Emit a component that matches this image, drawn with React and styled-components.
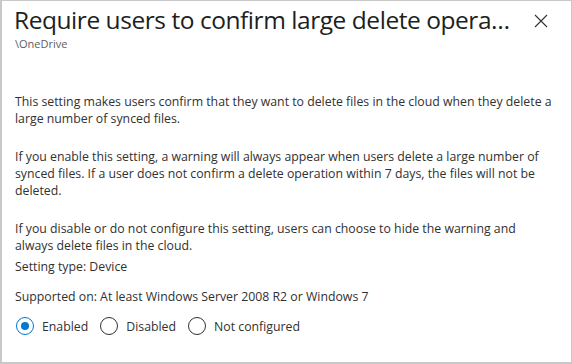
import React, { useState } from 'react'
import styled, { createGlobalStyle } from 'styled-components'

const Global = createGlobalStyle`
  html, body { margin: 0; padding: 0; background: #fff; }
  body { font-family: "Open Sans", "Noto Sans", sans-serif; color: #323130; }
`

const options = ['Enabled', 'Disabled', 'Not configured']

function App() {
  const [value, setValue] = useState('Enabled')
  return (
    <>
      <Global />
      <Panel>
        <Header>
          <TitleBlock>
            <Title>Require users to confirm large delete operations</Title>
            <Path>\OneDrive</Path>
          </TitleBlock>
          <Close aria-label="Close">
            <svg width="14" height="14" viewBox="0 0 14 14">
              <path d="M1 1L13 13M13 1L1 13" stroke="#323130" strokeWidth="1.1" fill="none" />
            </svg>
          </Close>
        </Header>
        <Body>
          <Para>
            This setting makes users confirm that they want to delete files in the cloud when they delete a
            large number of synced files.
          </Para>
          <Para>
            If you enable this setting, a warning will always appear when users delete a large number of
            synced files. If a user does not confirm a delete operation within 7 days, the files will not be
            deleted.
          </Para>
          <Para last>
            If you disable or do not configure this setting, users can choose to hide the warning and
            always delete files in the cloud.
          </Para>
          <Meta>Setting type: Device</Meta>
          <Meta>Supported on: At least Windows Server 2008 R2 or Windows 7</Meta>
          <Radios>
            {options.map((o) => (
              <Option key={o} onClick={() => setValue(o)}>
                <Circle checked={value === o} />
                {o}
              </Option>
            ))}
          </Radios>
        </Body>
      </Panel>
    </>
  )
}

export default App

const Panel = styled.div`
  width: 572px;
  height: 364px;
  box-sizing: border-box;
  border: 1px solid #c8c8c8;
  border-left-width: 2px;
  border-bottom-width: 2px;
  background: #fff;
  overflow: hidden;
`

const Header = styled.div`
  display: flex;
  align-items: flex-start;
  padding: 2px 0 0 12px;
`

const TitleBlock = styled.div`
  flex: 1;
  min-width: 0;
`

const Title = styled.div`
  font-size: 24.5px;
  line-height: 34px;
  font-weight: 400;
  color: #201f1e;
  white-space: nowrap;
  overflow: hidden;
  text-overflow: ellipsis;
  max-width: 503px;
  letter-spacing: -0.45px;
`

const Path = styled.div`
  font-size: 11px;
  line-height: 14px;
  color: #605e5c;
  padding-left: 1px;
`

const Close = styled.button`
  border: none;
  background: none;
  padding: 0;
  margin: 11px 23px 0 0;
  width: 14px;
  height: 14px;
  display: flex;
`

const Body = styled.div`
  padding: 42px 16px 0 13px;
  font-size: 12.3px;
  line-height: 17px;
  color: #323130;
`

const Para = styled.p`
  margin: 0 0 ${(p) => (p.last ? '4px' : '21px')} 0;
`

const Meta = styled.div`
  margin-bottom: 13px;
`

const Radios = styled.div`
  display: flex;
  gap: 12px;
  margin-top: -1px;
  padding-left: 1px;
`

const Option = styled.label`
  display: flex;
  align-items: center;
  gap: 8px;
  cursor: pointer;
  color: #323130;
`

const Circle = styled.span`
  width: 18px;
  height: 18px;
  box-sizing: border-box;
  border-radius: 50%;
  border: 1px solid ${(p) => (p.checked ? '#0078d4' : '#323130')};
  position: relative;
  &::after {
    content: '';
    display: ${(p) => (p.checked ? 'block' : 'none')};
    position: absolute;
    left: 4px;
    top: 4px;
    width: 8px;
    height: 8px;
    border-radius: 50%;
    background: #0078d4;
  }
`
